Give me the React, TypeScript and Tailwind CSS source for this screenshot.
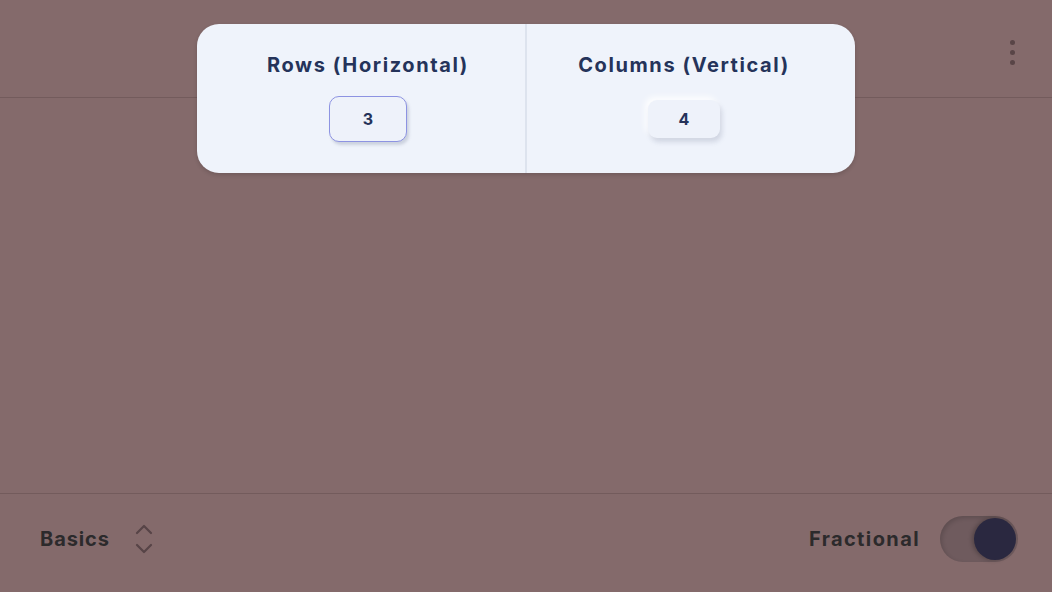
import React from "react";

export default function App() {
  return (
    <div className="w-[1052px] h-[592px] bg-[#846a6b] flex flex-col overflow-hidden" style={{ fontFamily: "Inter, 'Open Sans', sans-serif" }}>
      <div className="relative h-[98px] border-b border-[#735b5c] flex justify-end items-start">
        <div className="absolute left-[197px] top-[24px] w-[658px] h-[149px] rounded-[22px] bg-[#eff3fb] flex shadow-[0_2px_4px_rgba(0,0,0,0.15)] z-10">
          <div className="flex-1 flex flex-col items-center pt-[27px] pl-[14px] border-r-2 border-[#dde3ee]">
            <div className="text-[20px] leading-[28px] font-bold text-[#25335a] tracking-[1.6px]">Rows (Horizontal)</div>
            <div className="mt-[17px] w-[78px] h-[46px] rounded-[10px] border border-[#8d93e2] bg-[#eef2fa] shadow-[2px_3px_3px_rgba(100,110,140,0.25)] flex items-center justify-center text-[16px] font-bold text-[#25335a]">3</div>
          </div>
          <div className="flex-1 flex flex-col items-center pt-[27px] pr-[14px]">
            <div className="text-[20px] leading-[28px] font-bold text-[#25335a] tracking-[1.6px]">Columns (Vertical)</div>
            <div className="mt-[21px] w-[72px] h-[38px] rounded-[9px] bg-[#eef2fa] shadow-[2px_4px_5px_rgba(100,110,140,0.22),-3px_-3px_6px_rgba(255,255,255,0.9)] flex items-center justify-center text-[16px] font-bold text-[#25335a]">4</div>
          </div>
        </div>
        <div className="mt-[40px] mr-[37px] flex flex-col gap-[5px]">
          <div className="w-[5px] h-[5px] rounded-full bg-[#594547]" />
          <div className="w-[5px] h-[5px] rounded-full bg-[#594547]" />
          <div className="w-[5px] h-[5px] rounded-full bg-[#594547]" />
        </div>
      </div>
      <div className="flex-1" />
      <div className="h-[99px] border-t border-[#735b5c] flex items-start justify-between pl-[40px] pr-[34px] pt-[22px]">
        <div className="flex items-center gap-[24px] h-[46px]">
          <span className="text-[20px] font-bold text-[#2c2a2c] tracking-[0.9px]">Basics</span>
          <svg width="20" height="30" viewBox="0 0 20 30" fill="none" stroke="#574447" strokeWidth="2.2" strokeLinecap="round" strokeLinejoin="round">
            <path d="M3 9 L10 2 L17 9" />
            <path d="M3 21 L10 28 L17 21" />
          </svg>
        </div>
        <div className="flex items-center gap-[20px] h-[46px]">
          <span className="text-[20px] font-bold text-[#2c2a2c] tracking-[1.4px]">Fractional</span>
          <div className="w-[78px] h-[46px] rounded-full bg-[#6f5b5e] shadow-[inset_2px_2px_4px_rgba(0,0,0,0.15)] flex items-center justify-end pr-[2px]">
            <div className="w-[42px] h-[42px] rounded-full bg-[#2a2840] shadow-[-2px_0_4px_rgba(0,0,0,0.25)]" />
          </div>
        </div>
      </div>
    </div>
  );
}
